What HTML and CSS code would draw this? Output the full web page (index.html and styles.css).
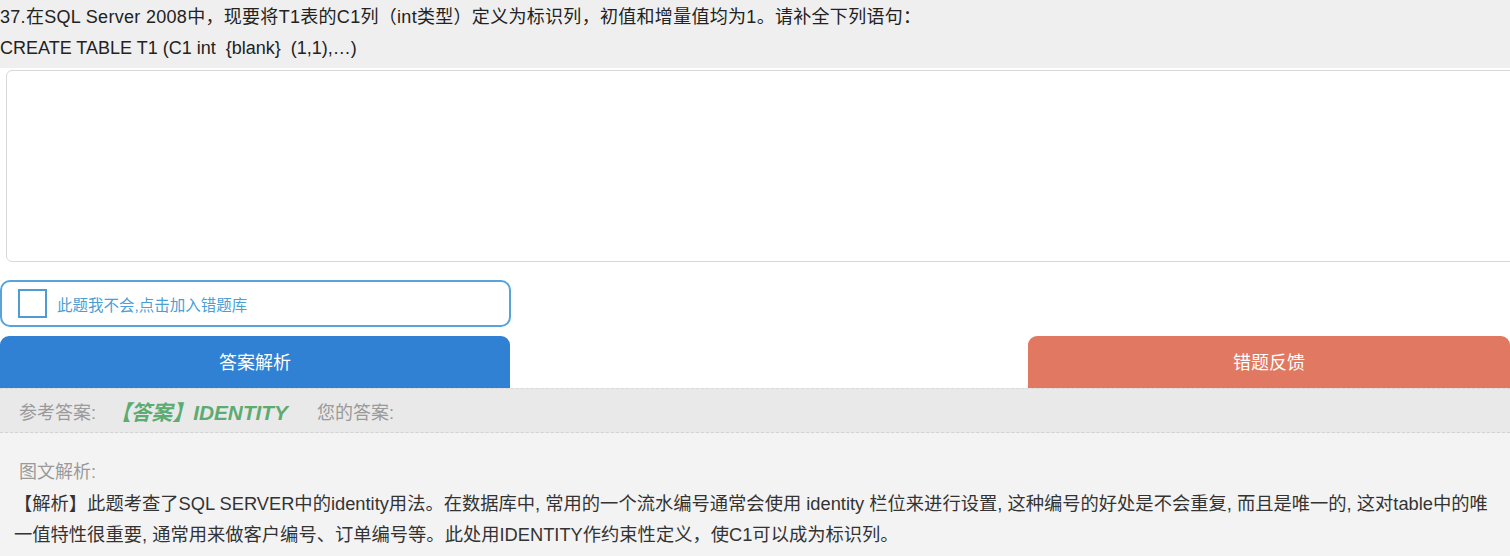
FILE: index.html
```html
<!DOCTYPE html>
<html>
<head>
    <title>填空题</title>
    <meta charset="utf-8">
    <link rel="stylesheet" href="styles.css">
</head>
<body>
    <div class="question">
        <div class="question-title">37.在SQL Server 2008中，现要将T1表的C1列（int类型）定义为标识列，初值和增量值均为1。请补全下列语句：</div>
        <div class="question-code">CREATE TABLE T1 (C1 int &nbsp;{blank} &nbsp;(1,1),…)</div>
    </div>

    <div class="answer-area">
        <textarea class="answer-input"></textarea>

        <label class="wrong-book">
            <span class="check-box"></span>
            <span class="wrong-text">此题我不会,点击加入错题库</span>
        </label>

        <div class="buttons">
            <button class="btn btn-analysis">答案解析</button>
            <button class="btn btn-feedback">错题反馈</button>
        </div>
    </div>

    <div class="result-bar">
        <span class="label">参考答案:</span>
        <span class="right-answer">【答案】IDENTITY</span>
        <span class="label">您的答案:</span>
    </div>

    <div class="analysis">
        <div class="analysis-title">图文解析:</div>
        <div class="analysis-text">【解析】此题考查了SQL SERVER中的identity用法。在数据库中, 常用的一个流水编号通常会使用 identity 栏位来进行设置, 这种编号的好处是不会重复, 而且是唯一的, 这对table中的唯一值特性很重要, 通常用来做客户编号、订单编号等。此处用IDENTITY作约束性定义，使C1可以成为标识列。</div>
    </div>
</body>
</html>
```

FILE: styles.css
```css
body {
    margin: 0;
    padding: 0;
    font-family: "Liberation Sans", "Noto Sans CJK SC", sans-serif;
    background-color: #f3f3f3;
    overflow: hidden;
}
.question {
    background-color: #efefef;
    color: #222;
    font-size: 18px;
    line-height: 31px;
    padding-top: 2px;
    height: 66px;
}
.question-title {
    letter-spacing: 0.3px;
}
.answer-area {
    background-color: #fff;
    padding-top: 2px;
}
.answer-input {
    display: block;
    box-sizing: border-box;
    width: calc(100% + 10px);
    height: 192px;
    margin: 0 0 0 6px;
    border: 1px solid #d8d8d8;
    border-radius: 6px;
    resize: none;
    outline: none;
}
.wrong-book {
    display: flex;
    align-items: center;
    box-sizing: border-box;
    width: 511px;
    height: 47px;
    margin-top: 18px;
    padding-left: 16px;
    border: 2px solid #58a3d8;
    border-radius: 10px;
    cursor: pointer;
}
.check-box {
    box-sizing: border-box;
    width: 29px;
    height: 29px;
    border: 2px solid #4f9bd3;
}
.wrong-text {
    margin-left: 10px;
    font-size: 15.5px;
    color: #4a9fd5;
}
.buttons {
    display: flex;
    justify-content: space-between;
    margin-top: 9px;
}
.btn {
    height: 52px;
    padding-bottom: 4px;
    border: none;
    border-radius: 9px 9px 0 0;
    color: #fff;
    font-size: 18px;
    font-family: "Liberation Sans", "Noto Sans CJK SC", sans-serif;
    cursor: pointer;
}
.btn-analysis {
    width: 510px;
    background-color: #3080d4;
}
.btn-feedback {
    width: 482px;
    background-color: #e07862;
}
.result-bar {
    display: flex;
    align-items: center;
    box-sizing: border-box;
    height: 45px;
    padding-left: 19px;
    background-color: #e9e9e9;
    border-top: 1px dashed #d9d9d9;
    border-bottom: 1px dashed #d2d2d2;
    font-size: 18px;
}
.label {
    color: #9a9a9a;
}
.right-answer {
    margin: 0 29px 0 14px;
    color: #5cab72;
    font-weight: bold;
    font-style: italic;
    font-size: 20.8px;
}
.analysis {
    padding: 24px 5px 0 19px;
    font-size: 18.3px;
    line-height: 31px;
}
.analysis-title {
    color: #9a9a9a;
    font-size: 18px;
}
.analysis-text {
    color: #333;
    margin-left: -5px;
}
```
